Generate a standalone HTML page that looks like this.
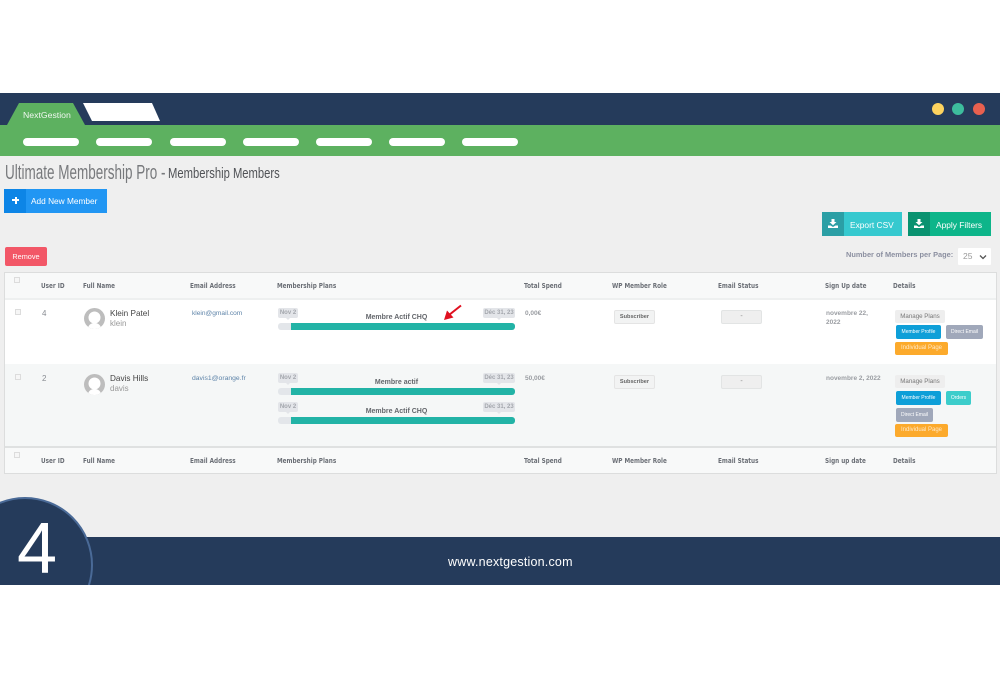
<!DOCTYPE html>
<html><head><meta charset="utf-8"><style>
html,body{margin:0;padding:0;background:#fff}
#p{position:relative;width:1000px;height:679px;overflow:hidden;background:#fff;font-family:"Liberation Sans",sans-serif;filter:blur(.35px)}
#p div{position:absolute;white-space:nowrap;box-sizing:border-box}
.h{font-size:6.8px;font-weight:bold;color:#6b6f76;line-height:10px;font-family:"DejaVu Sans",sans-serif;transform-origin:0 50%;transform:scaleX(.84)}
.cb{width:6px;height:6px;background:#f6f6f6;border:1px solid #dcdcdc}
.t{font-size:7px;line-height:10px;color:#888c92}
.pill{background:#fff;border-radius:4px;width:56px;height:8px;top:138px}
.tip{height:10px;background:#e3e5e9;border-radius:2px;font-size:6px;font-weight:bold;color:#a3a6ac;text-align:center;line-height:10px}
.tip:after{content:"";position:absolute;left:50%;margin-left:-2px;top:10px;border:2px solid transparent;border-top-color:#e3e5e9}
.bar{left:278px;width:237px;height:7px;background:#e3e6ea;border-radius:3px;overflow:hidden}
.bar i{position:absolute;left:13px;right:0;top:0;bottom:0;background:#22b3a6;display:block}
.pn{left:278px;width:237px;text-align:center;font-size:7px;font-weight:bold;color:#64676c;line-height:10px}
.btn{text-align:center;font-size:5px;color:#fff;border-radius:2px;line-height:14px;height:14px}
.mp{background:#eeeeee;color:#777;font-size:6.2px;left:895px;width:50px;height:13px;line-height:13px;border-radius:2px;text-align:center}
.ip{background:#fcaa2c;font-size:6px;left:895px;width:53px;height:13px;line-height:13px;color:#ffe9c8;border-radius:2px;text-align:center}
.sb{left:614px;width:41px;height:14px;background:#f2f3f3;border:1px solid #e4e4e4;border-radius:2px;font-size:5.6px;font-weight:bold;color:#666;text-align:center;line-height:13px}
.es{left:721px;width:41px;height:14px;background:#efefef;border:1px solid #e2e4e4;border-radius:2px;font-size:7px;color:#888;text-align:center;line-height:12px}
</style></head><body><div id="p">
<div style="left:0;top:93px;width:1000px;height:32px;background:#253b5b"></div>
<div style="left:0;top:125px;width:1000px;height:31px;background:#5db160"></div>
<div style="left:0;top:156px;width:1000px;height:381px;background:#efefef"></div>
<div style="left:0;top:537px;width:1000px;height:48px;background:#253b5b"></div>
<svg style="position:absolute;left:0;top:93px" width="170" height="32"><polygon points="7,32 19,10 73,10 85,32" fill="#5db160"/><polygon points="83,10 152,10 160,28 92,28" fill="#fff"/></svg>
<div style="left:23px;top:105px;font-size:8.7px;line-height:20px;color:#f0f7f0">NextGestion</div>
<div class="pill" style="left:23px"></div><div class="pill" style="left:96px"></div><div class="pill" style="left:170px"></div><div class="pill" style="left:243px"></div><div class="pill" style="left:316px"></div><div class="pill" style="left:389px"></div><div class="pill" style="left:462px"></div>
<div style="left:932px;top:103px;width:12px;height:12px;border-radius:50%;background:#fdd35f"></div>
<div style="left:952px;top:103px;width:12px;height:12px;border-radius:50%;background:#3dbd9d"></div>
<div style="left:973px;top:103px;width:12px;height:12px;border-radius:50%;background:#e8604f"></div>

<div style="left:5px;top:162px;font-size:20px;line-height:22px;color:#77797c;transform-origin:0 50%;transform:scaleX(.675)">Ultimate Membership Pro -</div>
<div style="left:168px;top:165px;font-size:14.5px;line-height:18px;color:#505256;transform-origin:0 50%;transform:scaleX(.775)">Membership Members</div>

<div style="left:4px;top:189px;width:103px;height:24px;background:#2196f3"></div>
<div style="left:4px;top:189px;width:22px;height:24px;background:#0d85e6"></div>
<div style="left:12px;top:199px;width:7px;height:2px;background:#fff"></div><div style="left:14.5px;top:196.5px;width:2px;height:7px;background:#fff"></div>
<div style="left:31px;top:196px;font-size:8.3px;line-height:11px;color:#fff">Add New Member</div>

<div style="left:822px;top:212px;width:80px;height:24px;background:#36c9cf"></div>
<div style="left:822px;top:212px;width:22px;height:24px;background:#2b9fa5"></div>
<svg style="position:absolute;left:828px;top:219px" width="10" height="9"><path d="M3.500 0h3v3h2L5 6.200 1.500 3h2zM0 6.500h2.500L5 8l2.500-1.500H10V9H0z" fill="#fff"/></svg>
<div style="left:850px;top:220px;font-size:8.4px;line-height:11px;color:#fff">Export CSV</div>
<div style="left:908px;top:212px;width:83px;height:24px;background:#0db58a"></div>
<div style="left:908px;top:212px;width:22px;height:24px;background:#0a9270"></div>
<svg style="position:absolute;left:914px;top:219px" width="10" height="9"><path d="M3.500 0h3v3h2L5 6.200 1.500 3h2zM0 6.500h2.500L5 8l2.500-1.500H10V9H0z" fill="#fff"/></svg>
<div style="left:936px;top:220px;font-size:8.4px;line-height:11px;color:#fff">Apply Filters</div>

<div style="left:5px;top:247px;width:42px;height:19px;background:#f25767;border-radius:2px;color:#fff;font-size:7.3px;line-height:20px;text-align:center">Remove</div>
<div style="left:846px;top:250px;font-size:7.4px;font-weight:bold;line-height:10px;color:#8b8fa0">Number of Members per Page:</div>
<div style="left:958px;top:248px;width:33px;height:17px;background:#fff;border-radius:1px;font-size:8.5px;line-height:17px;color:#999;padding-left:5px">25</div>
<svg style="position:absolute;left:979px;top:254px" width="8" height="6"><path d="M1 1.500 4 4.500 7 1.500" fill="none" stroke="#555" stroke-width="1.300"/></svg>

<!-- table -->
<div style="left:4px;top:272px;width:993px;height:202px;background:#f8f9f9;border:1px solid #dcdddd"></div>
<div style="left:5px;top:298px;width:991px;height:2px;background:#eef0f0"></div>
<div style="left:5px;top:300px;width:991px;height:64px;background:#fff"></div>
<div style="left:5px;top:364px;width:991px;height:82px;background:#f5f7f7"></div>
<div style="left:5px;top:446px;width:991px;height:1.500px;background:#dfe1e1"></div>

<div class="cb" style="left:14px;top:277px"></div>
<div class="h" style="left:41px;top:281px">User ID</div><div class="h" style="left:83px;top:281px">Full Name</div><div class="h" style="left:190px;top:281px">Email Address</div><div class="h" style="left:277px;top:281px">Membership Plans</div><div class="h" style="left:524px;top:281px">Total Spend</div><div class="h" style="left:612px;top:281px">WP Member Role</div><div class="h" style="left:718px;top:281px">Email Status</div><div class="h" style="left:825px;top:281px">Sign Up date</div><div class="h" style="left:893px;top:281px">Details</div>

<div class="cb" style="left:15px;top:309px"></div>
<div class="t" style="left:42px;top:309px;font-size:8px">4</div>
<svg style="position:absolute;left:84px;top:308px" width="21" height="21"><defs><clipPath id="c1"><circle cx="10.500" cy="10.500" r="10.500"/></clipPath></defs><circle cx="10.500" cy="10.500" r="10.500" fill="#bdbdbd"/><g clip-path="url(#c1)"><circle cx="10.500" cy="9.500" r="6" fill="#fff"/><path d="M4 21c0-4 3-6 6.500-6S17 17 17 21z" fill="#fff"/></g></svg>
<div style="left:110px;top:308px;font-size:8.2px;line-height:11px;color:#444">Klein Patel</div>
<div style="left:110px;top:319px;font-size:8px;line-height:10px;color:#999">klein</div>
<div style="left:192px;top:309px;font-size:6.6px;line-height:10px;color:#5d83a8">klein@gmail.com</div>
<div class="tip" style="left:278px;top:308px;width:20px">Nov 2</div>
<div class="tip" style="left:483px;top:308px;width:32px">Déc 31, 23</div>
<div class="pn" style="top:313px">Membre Actif CHQ</div>
<div class="bar" style="top:323px"><i></i></div>
<svg style="position:absolute;left:443px;top:304px" width="20" height="18"><path d="M18 1.500 6 11" stroke="#e01020" stroke-width="2" fill="none"/><polygon points="1,16 4,6.500 10.500,13.500" fill="#e01020"/></svg>
<div class="t" style="left:525px;top:309px;font-weight:bold;color:#9a9da2;font-size:6.500px">0,00€</div>
<div class="sb" style="top:310px">Subscriber</div>
<div class="es" style="top:310px">-</div>
<div class="t" style="left:826px;top:309px;font-weight:bold;color:#9a9da2;line-height:9px;font-size:6.500px;white-space:normal;width:50px">novembre 22,<br>2022</div>
<div class="mp" style="top:310px">Manage Plans</div>
<div class="btn" style="left:896px;top:325px;width:45px;background:#0e9fd8">Member Profile</div>
<div class="btn" style="left:946px;top:325px;width:37px;background:#a0a8ba">Direct Email</div>
<div class="ip" style="top:342px">Individual Page</div>

<div class="cb" style="left:15px;top:374px"></div>
<div class="t" style="left:42px;top:374px;font-size:8px">2</div>
<svg style="position:absolute;left:84px;top:374px" width="21" height="21"><defs><clipPath id="c2"><circle cx="10.500" cy="10.500" r="10.500"/></clipPath></defs><circle cx="10.500" cy="10.500" r="10.500" fill="#bdbdbd"/><g clip-path="url(#c2)"><circle cx="10.500" cy="9.500" r="6" fill="#fff"/><path d="M4 21c0-4 3-6 6.500-6S17 17 17 21z" fill="#fff"/></g></svg>
<div style="left:110px;top:373px;font-size:8.200px;line-height:11px;color:#444">Davis Hills</div>
<div style="left:110px;top:384px;font-size:8px;line-height:10px;color:#999">davis</div>
<div style="left:192px;top:374px;font-size:6.8px;line-height:10px;color:#5d83a8">davis1@orange.fr</div>
<div class="tip" style="left:278px;top:373px;width:20px">Nov 2</div>
<div class="tip" style="left:483px;top:373px;width:32px">Déc 31, 23</div>
<div class="pn" style="top:378px">Membre actif</div>
<div class="bar" style="top:388px"><i></i></div>
<div class="tip" style="left:278px;top:402px;width:20px">Nov 2</div>
<div class="tip" style="left:483px;top:402px;width:32px">Déc 31, 23</div>
<div class="pn" style="top:407px">Membre Actif CHQ</div>
<div class="bar" style="top:417px"><i></i></div>
<div class="t" style="left:525px;top:374px;font-weight:bold;color:#9a9da2;font-size:6.500px">50,00€</div>
<div class="sb" style="top:375px">Subscriber</div>
<div class="es" style="top:375px">-</div>
<div class="t" style="left:826px;top:374px;font-weight:bold;color:#9a9da2;font-size:6.500px">novembre 2, 2022</div>
<div class="mp" style="top:375px">Manage Plans</div>
<div class="btn" style="left:896px;top:391px;width:45px;background:#0e9fd8">Member Profile</div>
<div class="btn" style="left:946px;top:391px;width:25px;background:#3ccdcb">Orders</div>
<div class="btn" style="left:896px;top:408px;width:37px;background:#a0a8ba">Direct Email</div>
<div class="ip" style="top:424px">Individual Page</div>

<div class="cb" style="left:14px;top:452px"></div>
<div class="h" style="left:41px;top:456px">User ID</div><div class="h" style="left:83px;top:456px">Full Name</div><div class="h" style="left:190px;top:456px">Email Address</div><div class="h" style="left:277px;top:456px">Membership Plans</div><div class="h" style="left:524px;top:456px">Total Spend</div><div class="h" style="left:612px;top:456px">WP Member Role</div><div class="h" style="left:718px;top:456px">Email Status</div><div class="h" style="left:825px;top:456px">Sign up date</div><div class="h" style="left:893px;top:456px">Details</div>

<!-- footer -->
<svg style="position:absolute;left:0;top:490px" width="100" height="95"><circle cx="25" cy="75" r="67" fill="#253b5b" stroke="#4a6a97" stroke-width="2"/></svg>
<div style="left:17px;top:509px;font-size:72px;line-height:80px;color:#fff">4</div>
<div style="left:448px;top:554px;font-size:12.5px;line-height:16px;color:#fff;letter-spacing:.2px">www.nextgestion.com</div>
</div></body></html>
